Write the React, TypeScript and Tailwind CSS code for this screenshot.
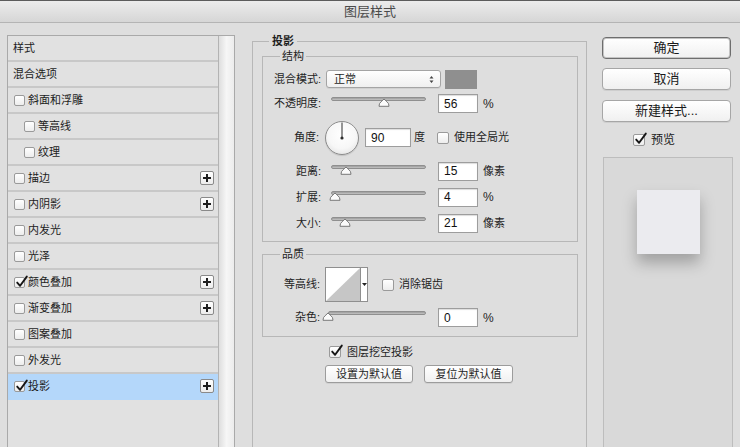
import React from "react";

function Check({ checked = false, small = false }: { checked?: boolean; small?: boolean }) {
  return (
    <span
      className={
        (small ? "w-[11px] h-[11px] " : "w-[12px] h-[12px] ") +
        "relative inline-block shrink-0 rounded-[2px] border border-[#9a9a9a] bg-linear-to-b from-white to-[#ededed]"
      }
    >
      {checked && (
        <svg className="absolute left-[0px] top-[-3px]" width="14" height="14" viewBox="0 0 14 14">
          <path
            d="M2.2 7.6 L5.1 10.8 L11.8 1.6"
            fill="none"
            stroke="#161616"
            strokeWidth="1.9"
            strokeLinecap="round"
            strokeLinejoin="round"
          />
        </svg>
      )}
    </span>
  );
}

function PlusBtn() {
  return (
    <span className="ml-auto mr-[4px] flex h-[14px] w-[14px] items-center justify-center rounded-[2px] border border-[#8a8a8a] bg-linear-to-b from-white to-[#ececec]">
      <svg width="10" height="10" viewBox="0 0 10 10">
        <path d="M5 1 V9 M1 5 H9" stroke="#1e1e1e" strokeWidth="2" />
      </svg>
    </span>
  );
}

type Row = { t: string; cb?: boolean; indent?: boolean; checked?: boolean; plus?: boolean; sel?: boolean };

const rows: Row[] = [
  { t: "样式" },
  { t: "混合选项" },
  { t: "斜面和浮雕", cb: true },
  { t: "等高线", cb: true, indent: true },
  { t: "纹理", cb: true, indent: true },
  { t: "描边", cb: true, plus: true },
  { t: "内阴影", cb: true, plus: true },
  { t: "内发光", cb: true },
  { t: "光泽", cb: true },
  { t: "颜色叠加", cb: true, checked: true, plus: true },
  { t: "渐变叠加", cb: true, plus: true },
  { t: "图案叠加", cb: true },
  { t: "外发光", cb: true },
  { t: "投影", cb: true, checked: true, plus: true, sel: true },
];

function LeftList() {
  return (
    <div className="ml-[7px] mt-[12px] flex h-[430px] w-[228px] border border-[#a9a9a9] bg-[#e1e1e1]">
      <div className="flex w-[210px] flex-col">
        {rows.map((r) => (
          <div
            key={r.t}
            className={
              (r.sel ? "bg-[#b4d7fa] border-[#b4d7fa] " : "border-[#c8c8c8] ") +
              (r.cb ? (r.indent ? "pl-[16px] " : "pl-[6px] ") : "pl-[5px] ") +
              "flex h-[26px] shrink-0 items-center border-b-2 text-[11px] text-[#1c1c1c]"
            }
          >
            {r.cb && <Check small checked={r.checked} />}
            <span className={r.cb ? "ml-[3px]" : ""}>{r.t}</span>
            {r.plus && <PlusBtn />}
          </div>
        ))}
      </div>
      <div className="w-[1px] bg-[#b3b3b3]" />
      <div className="w-[15px] bg-linear-to-r from-[#dedede] via-[#f6f6f6] to-[#ececec]" />
    </div>
  );
}

function Slider({ pos, wide = false }: { pos: number; wide?: boolean }) {
  return (
    <div className={(wide ? "w-[98px] " : "w-[95px] ") + "relative h-[13px] shrink-0"}>
      <div className="absolute left-0 right-0 top-0 h-[4px] rounded-full border border-[#8f8f8f] bg-linear-to-b from-[#9c9c9c] to-[#c4c4c4]" />
      <svg className="absolute top-[1px]" style={{ left: pos - 6 }} width="12" height="9" viewBox="0 0 12 9">
        <path
          d="M1 8.3 Q1 5.2 3 3.8 L6 1 L9 3.8 Q11 5.2 11 8.3 Z"
          fill="#fbfbfb"
          stroke="#7a7a7a"
          strokeWidth="1"
          strokeLinejoin="round"
        />
      </svg>
    </div>
  );
}

function NumBox({ v, wide = false }: { v: string; wide?: boolean }) {
  return (
    <div
      className={
        (wide ? "w-[46px] " : "w-[40px] ") +
        "flex h-[19px] shrink-0 items-center border border-[#9d9d9d] bg-white pl-[5px] text-[12px] text-[#111] shadow-[inset_0_1px_1px_rgba(0,0,0,0.14)]"
      }
    >
      {v}
    </div>
  );
}

function Label({ children, w = "w-[58px]" }: { children: React.ReactNode; w?: string }) {
  return <span className={w + " shrink-0 text-right text-[11px] text-[#1e1e1e]"}>{children}</span>;
}

function SliderRow({ label, pos, value, unit }: { label: string; pos: number; value: string; unit: string }) {
  return (
    <div className="flex h-[26px] items-center">
      <Label>{label}</Label>
      <div className="ml-[10px]">
        <Slider pos={pos} />
      </div>
      <div className="ml-[12px]">
        <NumBox v={value} />
      </div>
      <span className={(unit === "%" ? "text-[12px] " : "text-[11px] ") + "ml-[5px] text-[#1e1e1e]"}>{unit}</span>
    </div>
  );
}

function SmallBtn({ children, w }: { children: React.ReactNode; w: string }) {
  return (
    <div
      className={
        w +
        " flex h-[18px] items-center justify-center rounded-[3px] border border-[#9c9c9c] bg-linear-to-b from-white to-[#f0f0f0] text-[11px] text-[#1e1e1e] shadow-[0_1px_0_rgba(0,0,0,0.06)]"
      }
    >
      {children}
    </div>
  );
}

function Middle() {
  return (
    <fieldset className="ml-[17px] mt-[11px] h-[440px] w-[335px] shrink-0 border border-[#b7b7b7] p-0">
      <legend className="ml-[16px] px-[3px] text-[11px] font-bold leading-[14px] text-[#1e1e1e]">投影</legend>
      <div className="pl-[9px] pr-[8px]">
        {/* 结构 */}
        <fieldset className="mt-[1px] border border-[#b7b7b7] p-0 pb-[5px]">
          <legend className="ml-[17px] px-[2px] text-[11px] leading-[14px] text-[#1e1e1e]">结构</legend>
          <div className="mt-[5px] flex h-[22px] items-center">
            <Label>混合模式:</Label>
            <div className="ml-[5px] flex h-[18px] w-[115px] items-center rounded-[3px] border border-[#a4a4a4] bg-linear-to-b from-white to-[#efefef] pl-[7px] pr-[6px] text-[11px] text-[#1e1e1e] shadow-[0_1px_0_rgba(0,0,0,0.06)]">
              <span>正常</span>
              <svg className="ml-auto" width="5" height="9" viewBox="0 0 5 9">
                <path d="M0.5 3.6 L2.5 1 L4.5 3.6 Z M0.5 5.4 L2.5 8 L4.5 5.4 Z" fill="#444" />
              </svg>
            </div>
            <div className="ml-[4px] h-[19px] w-[32px] bg-[#8f8f8f]" />
          </div>
          <div className="flex h-[27px] items-center">
            <Label>不透明度:</Label>
            <div className="ml-[10px]">
              <Slider pos={53} />
            </div>
            <div className="ml-[12px]">
              <NumBox v="56" />
            </div>
            <span className="ml-[5px] text-[12px] text-[#1e1e1e]">%</span>
          </div>
          <div className="flex h-[41px] items-center">
            <Label w="w-[56px]">角度:</Label>
            <div className="relative ml-[6px] h-[34px] w-[34px] shrink-0 rounded-full border border-[#8c8c8c] bg-[radial-gradient(circle_at_50%_40%,#ffffff_0%,#f7f7f7_55%,#dadada_100%)] shadow-[0_1px_1px_rgba(0,0,0,0.12)]">
              <svg className="absolute inset-0" width="32" height="32" viewBox="0 0 32 32">
                <line x1="16" y1="16" x2="16" y2="0.5" stroke="#2e2e2e" strokeWidth="1" />
                <circle cx="16" cy="16" r="1.6" fill="#2e2e2e" />
              </svg>
            </div>
            <div className="ml-[6px]">
              <NumBox v="90" wide />
            </div>
            <span className="ml-[3px] text-[11px] text-[#1e1e1e]">度</span>
            <span className="ml-[12px] flex items-center">
              <Check />
            </span>
            <span className="ml-[5px] text-[11px] text-[#1e1e1e]">使用全局光</span>
          </div>
          <SliderRow label="距离:" pos={15} value="15" unit="像素" />
          <SliderRow label="扩展:" pos={4} value="4" unit="%" />
          <SliderRow label="大小:" pos={14} value="21" unit="像素" />
        </fieldset>

        {/* 品质 */}
        <fieldset className="mt-[5px] border border-[#b7b7b7] p-0 pb-[6px]">
          <legend className="ml-[17px] px-[2px] text-[11px] leading-[14px] text-[#1e1e1e]">品质</legend>
          <div className="mt-[5px] flex h-[37px] items-center">
            <Label w="w-[57px]">等高线:</Label>
            <div className="ml-[5px] flex h-[35px]">
              <svg width="36" height="35" viewBox="0 0 36 35">
                <rect x="0.5" y="0.5" width="35" height="34" fill="#fff" stroke="#8f8f8f" />
                <path d="M1 34 L35 1 L35 34 Z" fill="#c6c6c6" />
              </svg>
              <div className="flex h-[35px] w-[7px] items-center justify-center border border-l-0 border-[#8f8f8f] bg-white">
                <svg width="5" height="3" viewBox="0 0 5 3">
                  <path d="M0 0 H5 L2.5 3 Z" fill="#222" />
                </svg>
              </div>
            </div>
            <span className="ml-[14px] flex items-center">
              <Check />
            </span>
            <span className="ml-[5px] text-[11px] text-[#1e1e1e]">消除锯齿</span>
          </div>
          <div className="mt-[2px] flex h-[25px] items-center">
            <Label w="w-[57px]">杂色:</Label>
            <div className="ml-[8px]">
              <Slider pos={0} wide />
            </div>
            <div className="ml-[12px]">
              <NumBox v="0" />
            </div>
            <span className="ml-[5px] text-[12px] text-[#1e1e1e]">%</span>
          </div>
        </fieldset>

        <div className="mt-[7px] flex h-[16px] items-center pl-[67px]">
          <Check checked />
          <span className="ml-[6px] text-[11px] text-[#1e1e1e]">图层挖空投影</span>
        </div>
        <div className="mt-[5px] flex pl-[63px]">
          <SmallBtn w="w-[88px]">设置为默认值</SmallBtn>
          <div className="ml-[11px]">
            <SmallBtn w="w-[89px]">复位为默认值</SmallBtn>
          </div>
        </div>
      </div>
    </fieldset>
  );
}

function BigBtn({ children, primary = false }: { children: React.ReactNode; primary?: boolean }) {
  return (
    <div
      className={
        (primary
          ? "border-[#6e6e6e] shadow-[inset_0_0_0_1px_#c4c4c4] "
          : "border-[#a6a6a6] shadow-[0_1px_0_rgba(0,0,0,0.07)] ") +
        "flex h-[22px] w-[129px] items-center justify-center rounded-[4px] border bg-linear-to-b from-white to-[#f0f0f0] text-[13px] text-[#1a1a1a]"
      }
    >
      {children}
    </div>
  );
}

function Right() {
  return (
    <div className="ml-[15px] flex w-[131px] shrink-0 flex-col">
      <div className="mt-[14px]">
        <BigBtn primary>确定</BigBtn>
      </div>
      <div className="mt-[9px]">
        <BigBtn>取消</BigBtn>
      </div>
      <div className="mt-[10px]">
        <BigBtn>新建样式...</BigBtn>
      </div>
      <div className="mt-[11px] flex h-[13px] items-center pl-[31px]">
        <Check checked />
        <span className="ml-[6px] text-[12px] text-[#1a1a1a]">预览</span>
      </div>
      <div className="ml-[1px] mt-[11px] flex h-[300px] w-[130px] justify-center border border-[#bdbdbd] bg-[#d9d9d9] pt-[32px]">
        <div className="h-[64px] w-[63px] bg-[#ebebef] shadow-[0_9px_14px_rgba(0,0,0,0.26)]" />
      </div>
    </div>
  );
}

export default function App() {
  return (
    <div className="h-[447px] w-[740px] overflow-hidden bg-[#dedede] font-['Liberation_Sans','Noto_Sans_CJK_SC',sans-serif]">
      <div className="flex h-[23px] items-center justify-center border-b border-t border-b-[#b4b4b4] border-t-[#5c5c5c] bg-linear-to-b from-[#ececec] to-[#d6d6d6] text-[13px] text-[#4a4a4a]">
        图层样式
      </div>
      <div className="flex">
        <LeftList />
        <Middle />
        <Right />
      </div>
    </div>
  );
}
